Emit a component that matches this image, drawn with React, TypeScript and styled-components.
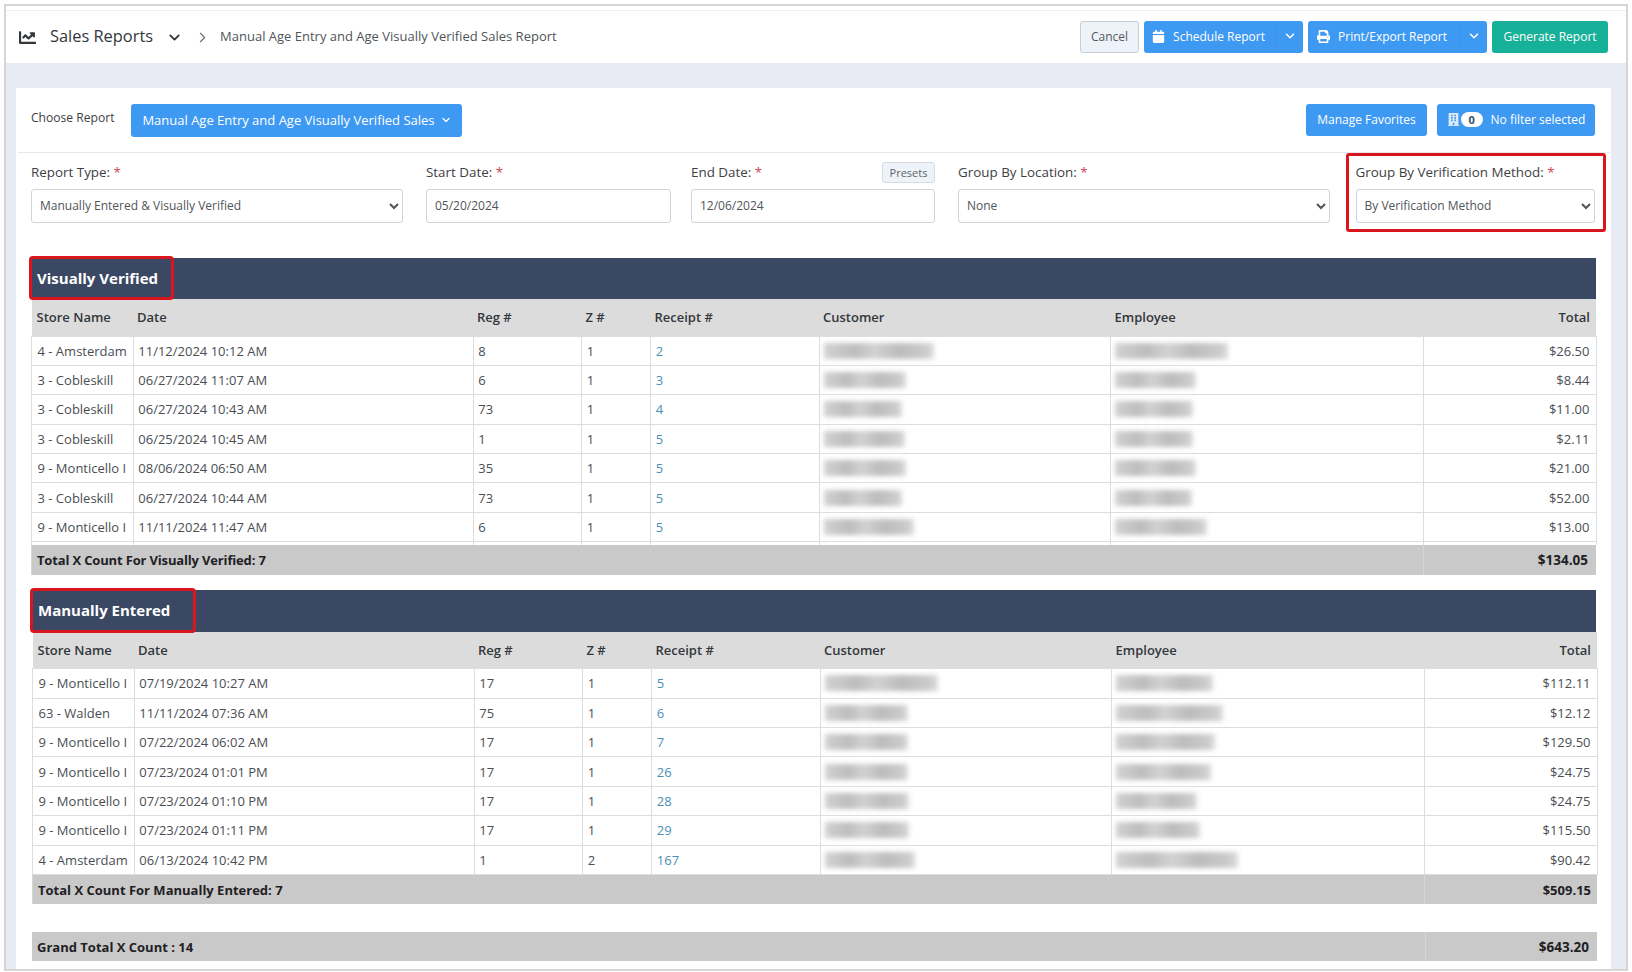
import styled, { createGlobalStyle } from 'styled-components';
import { ChevronDown, ChevronRight } from 'lucide-react';
import { FaBuilding, FaCalendar, FaChartLine, FaPrint } from 'react-icons/fa';

type Row = {
    store: string;
    date: string;
    reg: string;
    z: string;
    receipt: string;
    customer: number;
    employee: number;
    total: string;
};

const visualRows: Row[] = [
    { store: '4 - Amsterdam', date: '11/12/2024 10:12 AM', reg: '8', z: '1', receipt: '2', customer: 110, employee: 113, total: '$26.50' },
    { store: '3 - Cobleskill', date: '06/27/2024 11:07 AM', reg: '6', z: '1', receipt: '3', customer: 82, employee: 81, total: '$8.44' },
    { store: '3 - Cobleskill', date: '06/27/2024 10:43 AM', reg: '73', z: '1', receipt: '4', customer: 78, employee: 78, total: '$11.00' },
    { store: '3 - Cobleskill', date: '06/25/2024 10:45 AM', reg: '1', z: '1', receipt: '5', customer: 81, employee: 78, total: '$2.11' },
    { store: '9 - Monticello I', date: '08/06/2024 06:50 AM', reg: '35', z: '1', receipt: '5', customer: 82, employee: 81, total: '$21.00' },
    { store: '3 - Cobleskill', date: '06/27/2024 10:44 AM', reg: '73', z: '1', receipt: '5', customer: 78, employee: 77, total: '$52.00' },
    { store: '9 - Monticello I', date: '11/11/2024 11:47 AM', reg: '6', z: '1', receipt: '5', customer: 90, employee: 92, total: '$13.00' },
];

const manualRows: Row[] = [
    { store: '9 - Monticello I', date: '07/19/2024 10:27 AM', reg: '17', z: '1', receipt: '5', customer: 113, employee: 97, total: '$112.11' },
    { store: '63 - Walden', date: '11/11/2024 07:36 AM', reg: '75', z: '1', receipt: '6', customer: 83, employee: 107, total: '$12.12' },
    { store: '9 - Monticello I', date: '07/22/2024 06:02 AM', reg: '17', z: '1', receipt: '7', customer: 83, employee: 99, total: '$129.50' },
    { store: '9 - Monticello I', date: '07/23/2024 01:01 PM', reg: '17', z: '1', receipt: '26', customer: 83, employee: 95, total: '$24.75' },
    { store: '9 - Monticello I', date: '07/23/2024 01:10 PM', reg: '17', z: '1', receipt: '28', customer: 84, employee: 81, total: '$24.75' },
    { store: '9 - Monticello I', date: '07/23/2024 01:11 PM', reg: '17', z: '1', receipt: '29', customer: 84, employee: 84, total: '$115.50' },
    { store: '4 - Amsterdam', date: '06/13/2024 10:42 PM', reg: '1', z: '2', receipt: '167', customer: 90, employee: 122, total: '$90.42' },
];

const columns = [101.5, 340, 108.5, 69, 168.5, 291.5, 313, 172.5];

function ReportSection({ title, rows, totalLabel, total, titlePad, barHeight, tight, gap }: {
    title: string;
    rows: Row[];
    totalLabel: string;
    total: string;
    titlePad: number;
    barHeight: number;
    tight?: boolean;
    gap?: boolean;
}) {
    return (
        <Section>
            <SectionBar $h={barHeight}>
                <SectionTitle $pr={titlePad}>{title}</SectionTitle>
            </SectionBar>
            <ReportTable>
                <colgroup>
                    {columns.map((w, i) => <col key={i} width={w} />)}
                </colgroup>
                <thead>
                    <tr>
                        <HeadCell>Store Name</HeadCell>
                        <HeadCell>Date</HeadCell>
                        <HeadCell>Reg #</HeadCell>
                        <HeadCell>Z #</HeadCell>
                        <HeadCell>Receipt #</HeadCell>
                        <HeadCell>Customer</HeadCell>
                        <HeadCell>Employee</HeadCell>
                        <HeadCell $right>Total</HeadCell>
                    </tr>
                </thead>
                <tbody>
                    {rows.map((r, i) => (
                        <tr key={i}>
                            <BodyCell>{r.store}</BodyCell>
                            <BodyCell>{r.date}</BodyCell>
                            <BodyCell>{r.reg}</BodyCell>
                            <BodyCell>{r.z}</BodyCell>
                            <BodyCell><ReceiptLink href="#">{r.receipt}</ReceiptLink></BodyCell>
                            <BodyCell><Redacted $w={r.customer} /></BodyCell>
                            <BodyCell><Redacted $w={r.employee} /></BodyCell>
                            <BodyCell $right>{r.total}</BodyCell>
                        </tr>
                    ))}
                    {gap && (
                        <SpacerRow>
                            {columns.map((_, i) => <td key={i}></td>)}
                        </SpacerRow>
                    )}
                    <tr>
                        <TotalCell colSpan={7} $tight={tight}>{totalLabel}</TotalCell>
                        <TotalCell $right $large={tight}>{total}</TotalCell>
                    </tr>
                </tbody>
            </ReportTable>
        </Section>
    );
}

export default function App() {
    return (
        <Frame>
            <GlobalStyle />
            <Header>
                <FaChartLine size={17} color="#33373b" />
                <PageTitle>Sales Reports</PageTitle>
                <TitleChevron size={17} strokeWidth={2.6} />
                <Crumb size={17} strokeWidth={1.6} />
                <CrumbText>Manual Age Entry and Age Visually Verified Sales Report</CrumbText>
                <HeaderActions>
                    <CancelButton>Cancel</CancelButton>
                    <SplitGroup>
                        <SplitMain $w={132}><FaCalendar size={13} />Schedule Report</SplitMain>
                        <SplitCaret $w={27}><ChevronDown size={14} strokeWidth={2.6} /></SplitCaret>
                    </SplitGroup>
                    <SplitGroup>
                        <SplitMain $w={151}><FaPrint size={13} />Print/Export Report</SplitMain>
                        <SplitCaret $w={28}><ChevronDown size={14} strokeWidth={2.6} /></SplitCaret>
                    </SplitGroup>
                    <GenerateButton>Generate Report</GenerateButton>
                </HeaderActions>
            </Header>
            <Main>
                <Card>
                    <ChooseRow>
                        <ChooseLabel>Choose Report</ChooseLabel>
                        <ChooseButton>
                            Manual Age Entry and Age Visually Verified Sales
                            <ChevronDown size={12} strokeWidth={2.6} />
                        </ChooseButton>
                        <ChooseActions>
                            <ActionButton $w={121}>Manage Favorites</ActionButton>
                            <ActionButton $w={158}>
                                <FilterIcon size={13} />
                                <CountBadge>0</CountBadge>
                                <FilterText>No filter selected</FilterText>
                            </ActionButton>
                        </ChooseActions>
                    </ChooseRow>
                    <FormRow>
                        <Field $w={372}>
                            <LabelRow><FieldLabel>Report Type: <Star>*</Star></FieldLabel></LabelRow>
                            <SelectBox defaultValue="Manually Entered & Visually Verified">
                                <option>Manually Entered &amp; Visually Verified</option>
                            </SelectBox>
                        </Field>
                        <Field $w={245} $ml={23}>
                            <LabelRow><FieldLabel>Start Date: <Star>*</Star></FieldLabel></LabelRow>
                            <DateInput defaultValue="05/20/2024" />
                        </Field>
                        <Field $w={244} $ml={20}>
                            <LabelRow>
                                <FieldLabel>End Date: <Star>*</Star></FieldLabel>
                                <PresetsButton>Presets</PresetsButton>
                            </LabelRow>
                            <DateInput defaultValue="12/06/2024" />
                        </Field>
                        <Field $w={372} $ml={23}>
                            <LabelRow><FieldLabel>Group By Location: <Star>*</Star></FieldLabel></LabelRow>
                            <SelectBox defaultValue="None">
                                <option>None</option>
                            </SelectBox>
                        </Field>
                        <Field $w={239.5} $ml={25.5}>
                            <LabelRow><FieldLabel>Group By Verification Method: <Star>*</Star></FieldLabel></LabelRow>
                            <SelectBox defaultValue="By Verification Method">
                                <option>By Verification Method</option>
                            </SelectBox>
                            <FieldHighlight />
                        </Field>
                    </FormRow>
                    <ReportSection
                        title="Visually Verified"
                        rows={visualRows}
                        totalLabel="Total X Count For Visually Verified: 7"
                        total="$134.05"
                        titlePad={13}
                        barHeight={41}
                        tight
                        gap
                    />
                    <ShiftedBlock>
                        <ReportSection
                            title="Manually Entered"
                            rows={manualRows}
                            totalLabel="Total X Count For Manually Entered: 7"
                            total="$509.15"
                            titlePad={23}
                            barHeight={42}
                        />
                        <GrandTotal>
                            <GrandLabel>Grand Total X Count : 14</GrandLabel>
                            <GrandValue>$643.20</GrandValue>
                        </GrandTotal>
                    </ShiftedBlock>
                </Card>
            </Main>
        </Frame>
    );
}

const GlobalStyle = createGlobalStyle`
    html, body {
        margin: 0;
        height: 972px;
        overflow: hidden;
        background: #fff;
        font-family: "Open Sans", "Liberation Sans", sans-serif;
        color: #3d4145;
    }
    * {
        box-sizing: border-box;
    }
`;

const Frame = styled.div`
    width: 1624px;
    height: 967px;
    margin: 4px 0 0 4px;
    padding-top: 4px;
    display: flex;
    flex-direction: column;
    background: #fff;
    border: 2px solid #d6d6d6;
    border-top-width: 2px;
`;

const Header = styled.header`
    height: 53px;
    flex-shrink: 0;
    display: flex;
    align-items: center;
    padding: 0 18px 0 13px;
    border-top: 1px solid #eeeeee;
`;

const PageTitle = styled.h1`
    margin: 0 0 3px 14px;
    font-size: 16.4px;
    font-weight: 400;
    color: #33373b;
`;

const TitleChevron = styled(ChevronDown)`
    margin-left: 13px;
    color: #33373b;
`;

const Crumb = styled(ChevronRight)`
    margin-left: 11px;
    color: #6b7076;
`;

const CrumbText = styled.span`
    margin: 0 0 2px 9px;
    font-size: 13px;
    color: #50555a;
`;

const HeaderActions = styled.div`
    margin-left: auto;
    display: flex;
    gap: 5px;
    height: 32px;
`;

const BaseButton = styled.button`
    border: 0;
    padding: 0 0 2px;
    display: inline-flex;
    align-items: center;
    justify-content: center;
    font-family: inherit;
    font-size: 12px;
    color: #fff;
    background: #3e99f2;
    border-radius: 3px;
`;

const CancelButton = styled(BaseButton)`
    width: 59px;
    background: #eef3f9;
    color: #555a60;
    border: 1px solid #c9ced4;
`;

const SplitGroup = styled.div`
    display: flex;
`;

const SplitMain = styled(BaseButton)<{ $w: number }>`
    width: ${({ $w }) => $w}px;
    gap: 8px;
    padding-right: 3px;
    border-radius: 3px 0 0 3px;
`;

const SplitCaret = styled(BaseButton)<{ $w: number }>`
    width: ${({ $w }) => $w}px;
    border-radius: 0 3px 3px 0;
    border-left: 1px solid #3b95ee;
`;

const GenerateButton = styled(BaseButton)`
    width: 116px;
    background: #17b098;
`;

const Main = styled.main`
    flex: 1;
    min-height: 0;
    padding: 25px 15px 0 10px;
    background: #e9ebf4;
`;

const Card = styled.section`
    height: 100%;
    background: #fff;
    padding-top: 16px;
`;

const ChooseRow = styled.div`
    height: 49px;
    margin: 0 1px 0 2px;
    padding: 0 15px 15px 13px;
    display: flex;
    align-items: flex-start;
    border-bottom: 1px solid #e6e8ec;
`;

const ChooseLabel = styled.span`
    margin-top: 5px;
    font-size: 12.1px;
    color: #3d4145;
`;

const ChooseButton = styled(BaseButton)`
    width: 331px;
    height: 33px;
    margin-left: 17px;
    gap: 5px;
    font-size: 13px;
`;

const ChooseActions = styled.div`
    margin-left: auto;
    display: flex;
    gap: 10px;
`;

const ActionButton = styled(BaseButton)<{ $w: number }>`
    width: ${({ $w }) => $w}px;
    height: 32px;
`;

const FilterIcon = styled(FaBuilding)`
    color: #dce9f7;
`;

const CountBadge = styled.span`
    width: 22px;
    height: 15px;
    margin-left: 1px;
    border-radius: 8px;
    background: #fff;
    color: #33506e;
    font-size: 11px;
    font-weight: 700;
    line-height: 15px;
    text-align: center;
`;

const FilterText = styled.span`
    margin-left: 8px;
`;

const FormRow = styled.div`
    display: flex;
    padding: 9px 15px 0;
    margin-bottom: 35px;
`;

const Field = styled.div<{ $w: number; $ml?: number }>`
    position: relative;
    width: ${({ $w }) => $w}px;
    margin-left: ${({ $ml }) => $ml ?? 0}px;
    flex-shrink: 0;
`;

const LabelRow = styled.div`
    height: 21px;
    margin-bottom: 6px;
    display: flex;
    align-items: center;
    justify-content: space-between;
`;

const FieldLabel = styled.label`
    margin-bottom: 2px;
    font-size: 13.4px;
    font-weight: 500;
    color: #3d4145;
    white-space: nowrap;
`;

const Star = styled.span`
    color: #d2434f;
`;

const PresetsButton = styled.button`
    width: 53px;
    height: 21px;
    padding: 0;
    font-family: inherit;
    font-size: 11px;
    color: #5d6369;
    background: #eef3f9;
    border: 1px solid #d5dbe2;
    border-radius: 3px;
`;

const SelectBox = styled.select`
    display: block;
    width: 100%;
    height: 34px;
    padding: 0 4px 2px;
    font-family: inherit;
    font-size: 12px;
    color: #50555a;
    background: #fff;
    border: 1px solid #ced4da;
    border-radius: 3px;
`;

const DateInput = styled.input`
    display: block;
    width: 100%;
    height: 34px;
    padding: 0 8px 2px;
    font-family: inherit;
    font-size: 12px;
    color: #50555a;
    background: #fff;
    border: 1px solid #ced4da;
    border-radius: 3px;
`;

const FieldHighlight = styled.div`
    position: absolute;
    top: -9px;
    left: -10px;
    right: -11px;
    bottom: -9px;
    border: 3px solid #d9161e;
    border-radius: 3px;
    pointer-events: none;
`;

const Section = styled.div`
    margin: 0 15px 15px;
`;

const SectionBar = styled.div<{ $h: number }>`
    height: ${({ $h }) => $h}px;
    background: #3b4863;
    display: flex;
`;

const SectionTitle = styled.h2<{ $pr: number }>`
    height: calc(100% + 3px);
    margin: -2px 0 0 -2px;
    padding: 0 ${({ $pr }) => $pr}px 0 5px;
    display: flex;
    align-items: center;
    font-size: 15px;
    font-weight: 700;
    color: #fff;
    border: 3px solid #d9161e;
    border-radius: 4px;
`;

const ReportTable = styled.table`
    width: 100%;
    table-layout: fixed;
    border-collapse: collapse;
    font-size: 13px;
`;

const HeadCell = styled.th<{ $right?: boolean }>`
    height: 37px;
    padding: 0 6px 0 4px;
    background: #dcdcdc;
    font-weight: 600;
    color: #33373b;
    text-align: ${({ $right }) => ($right ? 'right' : 'left')};

    &:first-child {
        padding-left: 5px;
    }
`;

const BodyCell = styled.td<{ $right?: boolean }>`
    height: 29.4px;
    padding: 0 6px 0 4.8px;
    border: 1px solid #dddddd;
    color: #4a4e53;
    white-space: nowrap;
    text-align: ${({ $right }) => ($right ? 'right' : 'left')};

    &:first-child {
        padding-left: 5.5px;
    }
`;

const SpacerRow = styled.tr`
    td {
        height: 3px;
        padding: 0;
        border-left: 1px solid #dddddd;
        border-right: 1px solid #dddddd;
    }
`;

const TotalCell = styled.td<{ $right?: boolean; $tight?: boolean; $large?: boolean }>`
    height: 30px;
    padding: 0 ${({ $large }) => ($large ? 8 : 6)}px 0 5px;
    background: #c9c9c9;
    border-left: 1px solid #d6d6d6;
    font-size: ${({ $large }) => ($large ? 13.5 : 13)}px;
    font-weight: 700;
    letter-spacing: ${({ $tight }) => ($tight ? -0.16 : 0)}px;
    color: #1f2124;
    text-align: ${({ $right }) => ($right ? 'right' : 'left')};
`;

const ReceiptLink = styled.a`
    color: #4a90b5;
    text-decoration: none;
`;

const Redacted = styled.div<{ $w: number }>`
    width: ${({ $w }) => $w}px;
    height: 16px;
    margin-left: -0.8px;
    background: linear-gradient(90deg, #d2d2d2, #bdbdbd 28%, #d2d2d2 46%, #bcbcbc 68%, #cbcbcb 92%, #dddddd);
    filter: blur(2.4px);
`;

const ShiftedBlock = styled.div`
    margin-left: 1px;
`;

const GrandTotal = styled.div`
    height: 29px;
    margin: 28px 14px 0 15px;
    display: flex;
    background: #c9c9c9;
    font-size: 13px;
    font-weight: 700;
    color: #1f2124;
`;

const GrandLabel = styled.div`
    flex: 1;
    display: flex;
    align-items: center;
    padding-left: 5px;
`;

const GrandValue = styled.div`
    width: 172.5px;
    display: flex;
    align-items: center;
    justify-content: flex-end;
    padding-right: 8px;
    font-size: 13.5px;
    border-left: 1px solid #d6d6d6;
`;
